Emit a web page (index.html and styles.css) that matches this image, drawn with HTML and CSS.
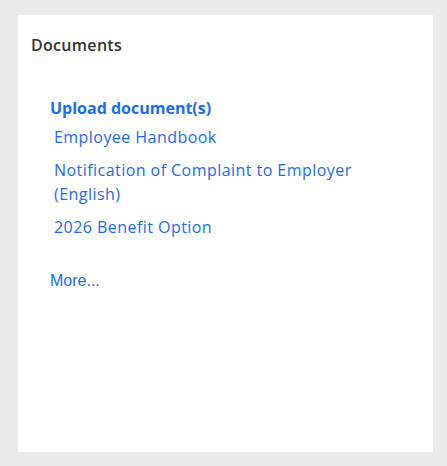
FILE: index.html
```html
<!DOCTYPE html>
<html lang="en">
<head>
  <meta charset="UTF-8" />
  <title>Documents</title>
  <link rel="stylesheet" href="styles.css">
</head>
<body>
  <section class="card">
    <h3 class="card-title">Documents</h3>
    <div class="doc-list">
      <a href="#" class="upload">Upload document(s)</a>
      <ul class="docs">
        <li><a href="#">Employee Handbook</a></li>
        <li><a href="#">Notification of Complaint to Employer (English)</a></li>
        <li><a href="#">2026 Benefit Option</a></li>
      </ul>
      <a href="#" class="more">More...</a>
    </div>
  </section>
</body>
</html>
```

FILE: styles.css
```css
* {
  margin: 0;
  padding: 0;
  box-sizing: border-box;
}

body {
  font-family: 'Open Sans', sans-serif;
  background: #ebebeb;
  padding: 15px 14px 14px 18px;
  height: 466px;
}

.card {
  background: #fff;
  height: 437px;
  padding: 20px 13px;
}

.card-title {
  font-size: 16px;
  font-weight: 600;
  color: #333;
  line-height: 20px;
  letter-spacing: 0.3px;
}

.doc-list {
  padding: 42px 0 0 19px;
}

.doc-list a {
  color: #1a6cf5;
  text-decoration: none;
}

.upload {
  display: block;
  font-size: 16px;
  font-weight: 700;
  line-height: 22px;
}

.docs {
  list-style: none;
  padding: 0 40px 0 4px;
}

.docs li {
  font-size: 16px;
  line-height: 24px;
  letter-spacing: 0.45px;
  margin-top: 9px;
}

.docs li:first-child {
  margin-top: 6px;
}

.more {
  display: block;
  font-size: 16px;
  font-family: 'Liberation Sans', sans-serif;
  margin-top: 33px;
}
```
